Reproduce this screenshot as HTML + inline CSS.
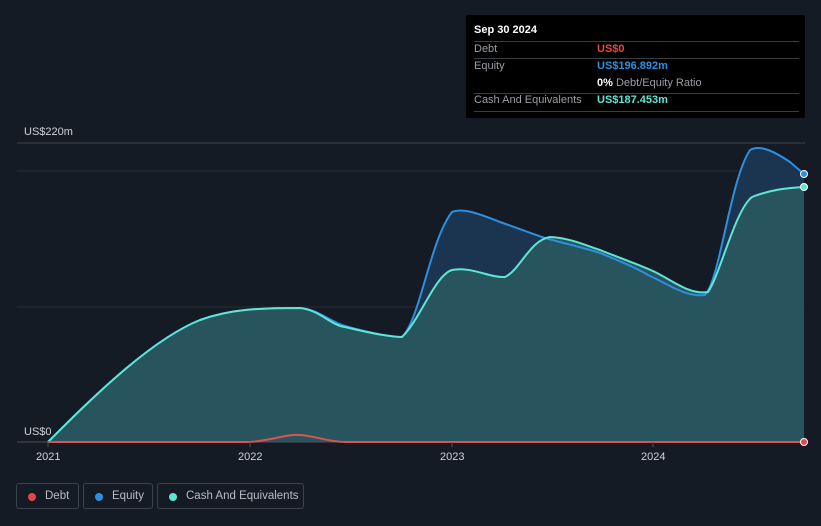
<!DOCTYPE html>
<html><head><style>
html,body{margin:0;width:821px;height:526px;overflow:hidden}
body{background:#151b24;font-family:"Liberation Sans",sans-serif;position:relative}
.tt{position:absolute;left:466px;top:15px;width:339px;height:103px;background:#000;border-radius:2px;font-size:11px}
.r{position:absolute;left:8px;right:6px;border-top:1px solid #3a3d42}
.l{position:absolute;left:8px;color:#9a9ea4;white-space:nowrap}
.v{position:absolute;left:131px;font-weight:bold;white-space:nowrap}
.leg{position:absolute;top:483px;height:26px;border:1px solid #3c424b;border-radius:3px;color:#b8bcc2;font-size:11.5px;line-height:25px;box-sizing:border-box;white-space:nowrap}
.leg i{position:absolute;left:11px;top:9px;width:8px;height:8px;border-radius:50%}
.leg span{position:absolute;left:28px}
</style></head><body>
<svg width="821" height="526" style="position:absolute;left:0;top:0">
<line x1="17" y1="143" x2="805" y2="143" stroke="#3a4048"/>
<line x1="17" y1="171" x2="805" y2="171" stroke="#262c34"/>
<line x1="17" y1="307" x2="805" y2="307" stroke="#262c34"/>
<path d="M48,442 C90,400 150,340 200,320 C230,309 260,308 300,308 C320,310 330,322 345,326 C370,333 390,337 402,337 C420,320 430,240 452,212 C462,208 475,212 500,222 C520,229 530,233 545,238 C570,245 585,248 600,253 C620,261 640,270 650,276 C670,285 685,297 705,295 C720,280 730,180 750,150 C760,144 775,152 790,162 L804,174 L804,442 Z" fill="#1b3550"/>
<path d="M48,442 C90,400 150,340 200,320 C230,309 260,308 300,308 C320,310 330,325 345,327 C370,333 390,337 402,337 C420,320 435,275 452,270 C470,266 490,278 505,277 C520,270 530,240 550,237 C570,238 585,245 600,250 C620,258 640,265 655,272 C675,282 690,295 708,292 C720,275 735,210 752,197 C770,190 785,188 804,187 L804,442 Z" fill="#28545e"/>
<path d="M48,442 C90,400 150,340 200,320 C230,309 260,308 300,308 C320,310 330,322 345,326 C370,333 390,337 402,337 C420,320 430,240 452,212 C462,208 475,212 500,222 C520,229 530,233 545,238 C570,245 585,248 600,253 C620,261 640,270 650,276 C670,285 685,297 705,295 C720,280 730,180 750,150 C760,144 775,152 790,162 L804,174" fill="none" stroke="#2d8fe0" stroke-width="2"/>
<path d="M48,442 C90,400 150,340 200,320 C230,309 260,308 300,308 C320,310 330,325 345,327 C370,333 390,337 402,337 C420,320 435,275 452,270 C470,266 490,278 505,277 C520,270 530,240 550,237 C570,238 585,245 600,250 C620,258 640,265 655,272 C675,282 690,295 708,292 C720,275 735,210 752,197 C770,190 785,188 804,187" fill="none" stroke="#5ee6d4" stroke-width="2"/>
<line x1="17" y1="442" x2="805" y2="442" stroke="#4a5058"/>
<path d="M48,442 L250,442 C275,440 285,434 300,435 C315,436 330,442 345,442 L804,442" fill="none" stroke="#d9534f" stroke-width="2"/>
<circle cx="804" cy="174" r="3.5" fill="#2d8fe0" stroke="#fff" stroke-width="1"/>
<circle cx="804" cy="187" r="3.5" fill="#5ee6d4" stroke="#fff" stroke-width="1"/>
<circle cx="804" cy="442" r="3.5" fill="#e84545" stroke="#fff" stroke-width="1"/>
<g fill="#cfd3d8" font-size="11" font-family="Liberation Sans,sans-serif">
<text x="24" y="135">US$220m</text><text x="24" y="435">US$0</text>
<text x="36" y="460">2021</text><text x="238" y="460">2022</text><text x="440" y="460">2023</text><text x="641" y="460">2024</text>
</g>
<g stroke="#4a5058"><line x1="48" y1="442" x2="48" y2="447"/><line x1="250" y1="442" x2="250" y2="447"/><line x1="452" y1="442" x2="452" y2="447"/><line x1="653" y1="442" x2="653" y2="447"/></g>
</svg>
<div class="tt">
<div style="position:absolute;left:8px;top:9px;color:#fff;font-weight:bold">Sep 30 2024</div>
<div class="r" style="top:26px"></div>
<div class="l" style="top:28px">Debt</div><div class="v" style="top:28px;color:#e84545">US$0</div>
<div class="r" style="top:43px"></div>
<div class="l" style="top:45px">Equity</div><div class="v" style="top:45px;color:#2d8fe0">US$196.892m</div>
<div class="v" style="top:62px;color:#fff">0% <span style="color:#9a9ea4;font-weight:normal">Debt/Equity Ratio</span></div>
<div class="r" style="top:78px"></div>
<div class="l" style="top:79px">Cash And Equivalents</div><div class="v" style="top:79px;color:#5ee6d4">US$187.453m</div>
<div class="r" style="top:96px"></div>
</div>
<div class="leg" style="left:16px;width:63px"><i style="background:#e84545"></i><span>Debt</span></div>
<div class="leg" style="left:83px;width:70px"><i style="background:#2d8fe0"></i><span>Equity</span></div>
<div class="leg" style="left:157px;width:147px"><i style="background:#5ee6d4"></i><span>Cash And Equivalents</span></div>
</body></html>
